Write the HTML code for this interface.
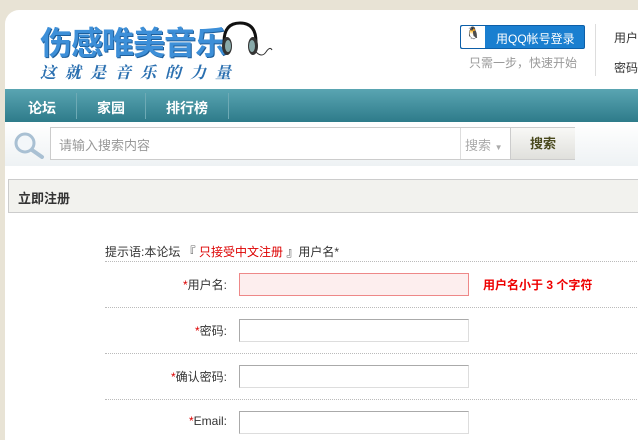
<!DOCTYPE html>
<html><head><meta charset="utf-8"><style>
*{margin:0;padding:0;box-sizing:border-box}
body{width:638px;height:435px;overflow:hidden;background:#e8e3d5;font-family:"Liberation Sans","Noto Sans CJK SC",sans-serif;font-size:12px;color:#333;position:relative}
.wrap{position:absolute;left:5px;top:10px;width:640px;height:430px;background:#fff;border-radius:14px 0 0 0}
.abs{position:absolute}
.nav{left:5px;top:89px;width:640px;height:33px;background:linear-gradient(#5aa5b2,#2e7b8a)}
.nav span{position:absolute;top:9px;color:#fff;font-weight:bold;font-size:14px}
.nav i{position:absolute;top:4px;width:1px;height:26px;background:#6eaab5}
.sbar{left:5px;top:122px;width:640px;height:44px;background:linear-gradient(#fff,#eef2f4)}
input{display:block}
.fi{position:absolute;left:239px;width:230px;height:23px;border:1px solid #aaa;border-bottom-color:#ddd;border-right-color:#ddd;background:#fff}
.lab{position:absolute;right:411px;font-size:12px;color:#333}
.lab b{color:#d00;font-weight:normal}
.dot{position:absolute;left:105px;width:540px;border-top:1px dotted #bbb}
</style></head><body>
<div class="wrap"></div>
<div class="abs" style="left:40px;top:18px;font-size:32px;font-weight:bold;color:#3d8fd8;letter-spacing:-1px;text-shadow:1px 1px 0 #1e5e9a">伤感唯美音乐</div>
<svg class="abs" style="left:218px;top:20px" width="56" height="40"><path d="M6 22 Q6 3 22 3 Q38 3 38 22" stroke="#111" stroke-width="3" fill="none"/><ellipse cx="9" cy="26" rx="5" ry="9" fill="#333"/><ellipse cx="35" cy="26" rx="5" ry="9" fill="#333"/><ellipse cx="10" cy="26" rx="3" ry="6" fill="#8aa"/><ellipse cx="34" cy="26" rx="3" ry="6" fill="#8aa"/><path d="M38 32 q6 6 10 0 q4 -6 6 -2" stroke="#333" fill="none"/></svg>
<div class="abs" style="left:40px;top:60px;font-size:16px;font-weight:bold;font-style:italic;color:#2a6fb0;letter-spacing:9px;font-family:'Noto Serif CJK SC',serif">这就是音乐的力量</div>
<div class="abs" style="left:460px;top:25px;width:125px;height:24px;background:#1a7fd0;border:1px solid #0d5fa8;border-radius:2px;color:#fff;font-size:12px"><span class="abs" style="left:0;top:0;width:24px;height:22px;background:#fff;border-radius:2px 0 0 2px;text-align:center">🐧</span><span class="abs" style="left:35px;top:4px">用QQ帐号登录</span></div>
<div class="abs" style="left:469px;top:54px;color:#999">只需一步，快速开始</div>
<div class="abs" style="left:595px;top:24px;width:1px;height:52px;background:#ddd"></div>
<div class="abs" style="left:614px;top:29px">用户</div>
<div class="abs" style="left:614px;top:59px">密码</div>
<div class="abs nav"><span style="left:23px">论坛</span><i style="left:71px"></i><span style="left:92px">家园</span><i style="left:140px"></i><span style="left:161px">排行榜</span><i style="left:223px"></i></div>
<div class="abs sbar"></div>
<svg class="abs" style="left:13px;top:131px" width="32" height="28"><circle cx="12" cy="12" r="9" fill="#f3f7fa" stroke="#a9c0d3" stroke-width="3"/><path d="M19 19 L29 26" stroke="#a9c0d3" stroke-width="4" stroke-linecap="round"/></svg>
<div class="abs" style="left:50px;top:127px;width:525px;height:33px;border:1px solid #ccc;background:#fff"></div>
<div class="abs" style="left:59px;top:135px;color:#999;font-size:13px">请输入搜索内容</div>
<div class="abs" style="left:460px;top:128px;width:1px;height:31px;background:#ddd"></div>
<div class="abs" style="left:465px;top:135px;color:#aaa;font-size:13px">搜索 <span style="font-size:8px">▼</span></div>
<div class="abs" style="left:510px;top:128px;width:65px;height:31px;background:linear-gradient(#f8f8f6,#e0e0dc);border-left:1px solid #ccc;text-align:center;line-height:31px;font-weight:bold;font-size:13px;color:#4a4a1e">搜索</div>
<div class="abs" style="left:8px;top:179px;width:640px;height:34px;background:#f2f2ee;border:1px solid #ccc"></div>
<div class="abs" style="left:18px;top:188px;font-weight:bold;font-size:13px">立即注册</div>
<div class="abs" style="left:105px;top:243px">提示语:本论坛 『 <span style="color:#d00">只接受中文注册</span> 』用户名*</div>
<div class="dot" style="top:261px"></div>
<div class="lab" style="top:276px"><b>*</b>用户名:</div>
<div class="fi" style="top:273px;background:#fdeeee;border:1px solid #e88"></div>
<div class="abs" style="left:483px;top:276px;color:#e00;font-weight:bold">用户名小于 3 个字符</div>
<div class="dot" style="top:307px"></div>
<div class="lab" style="top:322px"><b>*</b>密码:</div>
<div class="fi" style="top:319px"></div>
<div class="dot" style="top:353px"></div>
<div class="lab" style="top:368px"><b>*</b>确认密码:</div>
<div class="fi" style="top:365px"></div>
<div class="dot" style="top:399px"></div>
<div class="lab" style="top:414px"><b>*</b>Email:</div>
<div class="fi" style="top:411px"></div>
</body></html>
